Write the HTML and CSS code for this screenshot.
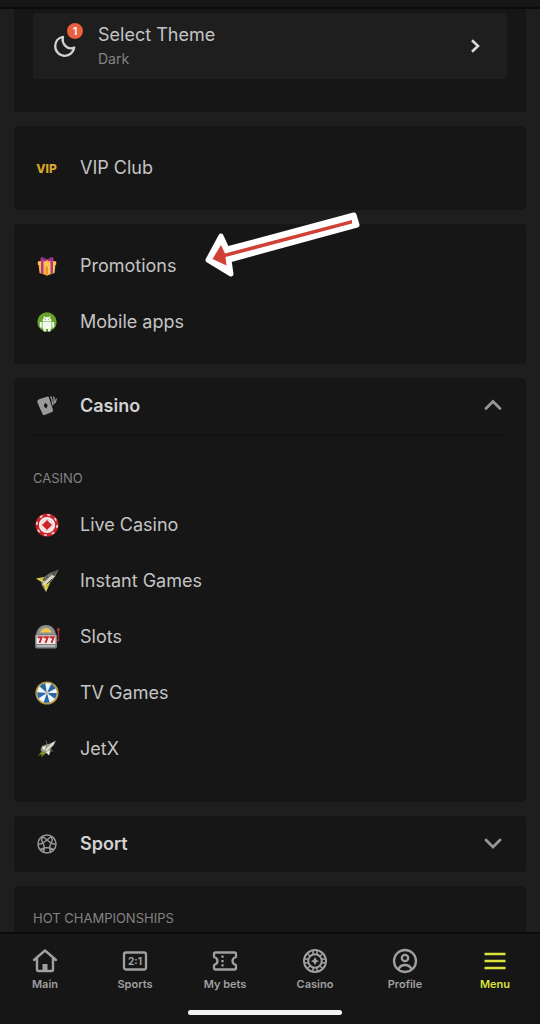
FILE: index.html
```html
<!DOCTYPE html>
<html lang="en">
<head>
<meta charset="utf-8">
<meta name="viewport" content="width=device-width, initial-scale=1">
<title>Menu</title>
<link rel="stylesheet" href="styles.css">
</head>
<body>
<div class="app">
  <header class="topbar"></header>
  <main class="content">
    <section class="card card-theme">
      <button class="theme" type="button">
        <span class="theme-icon">
          <svg width="24" height="24" viewBox="0 0 24 24" fill="none" stroke="#d2d2d2" stroke-width="2.300" stroke-linejoin="round"><path d="M10 2.800C5.300 3.400 2.200 7.300 2.200 12.200a9.600 9.600 0 0 0 9.600 9.600c4.900 0 8.800-3.500 9.400-8.300-2.500 1.300-6 1-8.600-1.400S9.300 5.800 10 2.800z"/></svg>
          <span class="badge">1</span>
        </span>
        <span class="theme-text">
          <span class="theme-title">Select Theme</span>
          <span class="theme-value">Dark</span>
        </span>
        <svg width="12" height="16" viewBox="0 0 12 16" fill="none" stroke="#d8d8d8" stroke-width="2.600"><path d="M2 2.200 8 8l-6 5.800"/></svg>
      </button>
    </section>

    <nav class="card card-links">
      <a class="row" href="#vip"><span class="icon vip">VIP</span>VIP Club</a>
    </nav>

    <nav class="card card-links">
      <a class="row" href="#promotions">
        <span class="icon"><svg width="20" height="20" viewBox="0 0 20 20"><path d="M1.500 8 10 10v9.500L2.500 17z" fill="#f3b63e"/><path d="M18.500 8 10 10v9.500l7.500-2.500z" fill="#f7cf55"/><path d="M.8 5.500 10 3.500l9.200 2v3.200L10 11 .8 8.700z" fill="#f9c750"/><path d="M4 5v12.500l2.500.8V5zM13.500 5v13.300l2.500-.8V5z" fill="#b7338c"/><path d="M9 10.500h2v9H9z" fill="#e7962f"/><path d="M10 5C7 6 3 5.500 3.500 2.500 4.500 0 8.500 1.500 10 5c1.500-3.500 5.500-5 6.500-2.500C17 5.500 13 6 10 5z" fill="#c13a9c"/><path d="M5 3q2-1 3.500 1.200M15 3q-2-1-3.500 1.200" stroke="#611c61" fill="none"/></svg></span>Promotions</a>
      <a class="row" href="#apps">
        <span class="icon"><svg width="20" height="20" viewBox="0 0 20 20"><circle cx="10" cy="10" r="9.700" fill="#67a32b"/><path d="M5.500 9a4.500 4 0 0 1 9 0zM5.500 9.600h9V16q0 1-1 1h-7q-1 0-1-1zM2.800 10h2v5.500h-2zM15.200 10h2v5.500h-2zM6.500 16H9v3.600H6.500zM11 16h2.500v3.600H11z" fill="#f3f8ee"/><path d="m6.800 4 1.200 2M13.200 4 12 6" stroke="#f3f8ee"/><circle cx="8.200" cy="7.300" r=".6" fill="#67a32b"/><circle cx="11.800" cy="7.300" r=".6" fill="#67a32b"/></svg></span>Mobile apps</a>
      <svg class="pointer" width="165" height="75" viewBox="0 0 165 75"><path d="M8 55 21 31 27 44 154 10 157 20 29 55 31 69z" fill="#fff" stroke="#fff" stroke-width="5" stroke-linejoin="round"/><path d="M12.500 54 21 40 25 48.500 152 15V18.500L25.500 52 26.500 60.500z" fill="#cf4035"/></svg>
    </nav>

    <section class="card">
      <button class="head" type="button" aria-expanded="true">
        <span class="icon"><svg width="20" height="20" viewBox="0 0 20 20"><path d="m2 3.300 8-2.600q1.500-.4 2 1l4 12.300q.4 1.500-1 2l-7.500 3q-1.500.5-2-1L.3 6.300q-.3-2 1.700-3z" fill="#9a9a9a"/><path d="m8 6.700 2.700 2.300-1.200 3.500-2.800-2.300z" fill="#161616"/><path d="M13 .8q1.300.1 1.500 1L16 9.500M16 .8q1.200.5 1.100 1.500L17 8M19.500 2.500 18 7" fill="none" stroke="#9a9a9a" stroke-width="1.300"/></svg></span>
        <span class="head-text">Casino</span>
        <svg width="20" height="12" viewBox="0 0 20 12" fill="none" stroke="#969696" stroke-width="2.800" stroke-linecap="round"><path d="m3 9.500 7-7 7 7"/></svg>
      </button>
      <div class="group">
        <h2 class="label">Casino</h2>
        <a class="row" href="#live"><span class="icon"><svg width="24" height="24" viewBox="0 0 24 24"><circle cx="12" cy="12" r="11.500" fill="#ca242b"/><circle cx="12" cy="12" r="10.200" fill="none" stroke="#e8c8c8" stroke-width="1.800" stroke-dasharray="3 5.010"/><circle cx="12" cy="12" r="6.800" fill="#cc2328" stroke="#f5eeee" stroke-width="2.600"/><circle cx="12" cy="12" r="5.600" fill="#f5eeee"/><path d="m12 7 5 5-5 5-5-5z" fill="#cc2328"/></svg></span>Live Casino</a>
        <a class="row" href="#instant"><span class="icon"><svg width="24" height="24" viewBox="0 0 24 24"><path d="M23.500.7 15 4 9 8 .8 9.500 6 13l1 4 4 6.300L15 14l5-6z" fill="#747469"/><path d="M1 9.500 9.500 8 7 12zM11 23l-1-7 3.500-3L15 14z" fill="#d2bb37"/><path d="m7 15 10-9 3 1-7 7-4 3z" fill="#d6d4c4"/><path d="m16 4 7-3-4 6z" fill="#55554f"/><path d="m3 10 6 3 2 8" fill="none" stroke="#eadb62" stroke-width="1.300"/><path d="m8 11 5-4M12 15l5-5" stroke="#4a4a40"/></svg></span>Instant Games</a>
        <a class="row" href="#slots"><span class="icon"><svg width="26" height="26" viewBox="0 0 26 26"><path d="M2 12C2.500 5 6 1 12 1s9.500 4 10 11z" fill="#8b8f90"/><path d="M6 8.500Q8 4 12 4t6 4.500z" fill="#edc551"/><rect x="1" y="10" width="22" height="14.500" rx="2" fill="#7c8182"/><rect x="2.500" y="11.500" width="19" height="8.500" fill="#f2ebe8"/><path d="M3.500 13.200h4.200L5.500 19M9.500 13.200h4.200L11.500 19M15.500 13.200h4.200L17.500 19" fill="none" stroke="#c8262c" stroke-width="1.900"/><path d="M3 22h18" stroke="#b3b6b6" stroke-width="2"/><path d="M23 16.500h1.500V6" fill="none" stroke="#a72c2c" stroke-width="1.400"/><circle cx="24.300" cy="5.500" r="1.500" fill="#b83231"/></svg></span>Slots</a>
        <a class="row" href="#tv"><span class="icon"><svg width="24" height="24" viewBox="0 0 24 24"><circle cx="12" cy="12" r="10.800" fill="#f0f5f8" stroke="#b89a3e" stroke-width="1.600"/><circle cx="12" cy="12" r="4.900" fill="none" stroke="#2867ac" stroke-width="9.800" stroke-dasharray="3.079 3.079"/><circle cx="12" cy="12" r="2" fill="#b9bcb0"/></svg></span>TV Games</a>
        <a class="row" href="#jetx"><span class="icon"><svg width="20" height="20" viewBox="0 0 20 20"><path d="M19 1.500 13 4.500 9 5.500 5 7 3.500 11 6 14l4 .5 2 2 1.500-4L14 9l3-3z" fill="#999a87"/><path d="m8 11 7-7 3-1.500L16 6l-6 6z" fill="#dfdfd2"/><path d="m5 8 4-.5-2 4zM9 13l4-2-1 5z" fill="#eeeee8"/><path d="m5 12-4 5 4-2-1 3.500L9 14" fill="#86882e"/><path d="M10 5 9 1.500M14 10l1.500 3" stroke="#686a58"/></svg></span>JetX</a>
      </div>
    </section>

    <section class="card">
      <button class="head" type="button" aria-expanded="false">
        <span class="icon"><svg width="20" height="20" viewBox="0 0 20 20" fill="none" stroke="#969696" stroke-width="1.500" stroke-linejoin="round"><circle cx="10" cy="10" r="9"/><path d="m10 6 4 3-1.500 4.800h-5L6 9zM10 6 6 2.500M10 6l4-3.500M14 9l4.500 1.500M6 9l-4.500 1.500M12.500 13.800l1 4.200M7.500 13.800 6.500 18M14 2.500l1.500 3.500L14 9M6 2.500 4.500 6 6 9M7.500 13.800 3.500 15.500M12.500 13.800l4 1.700"/></svg></span>
        <span class="head-text">Sport</span>
        <svg width="20" height="12" viewBox="0 0 20 12" fill="none" stroke="#969696" stroke-width="2.800" stroke-linecap="round"><path d="m3 3 7 7 7-7"/></svg>
      </button>
    </section>

    <section class="card card-hot"><h2 class="label">Hot championships</h2></section>
  </main>

  <footer class="bottom">
    <nav class="tabs">
      <a class="tab" href="#main"><svg width="28" height="28" viewBox="0 0 28 28" fill="none" stroke="#a0a0a0" stroke-width="2.400" stroke-linejoin="round" stroke-linecap="round"><path d="M3 13 14 3.500 25 13M6 11.500v11q0 1.500 1.500 1.500h13q1.500 0 1.500-1.500v-11"/><path d="M11.500 24v-7h5v7z" fill="#a0a0a0" stroke="none"/></svg>Main</a>
      <a class="tab" href="#sports"><svg width="28" height="28" viewBox="0 0 28 28"><rect x="3" y="5.500" width="22" height="17" rx="2" fill="none" stroke="#a0a0a0" stroke-width="2.300"/><text class="score" x="14" y="18" text-anchor="middle">2:1</text></svg>Sports</a>
      <a class="tab" href="#bets"><svg width="28" height="28" viewBox="0 0 28 28" fill="none" stroke="#a0a0a0" stroke-width="2.300" stroke-linejoin="round"><path d="M4.500 5.500h19q1.500 0 1.500 1.500v3q-3.500 1-3.500 4t3.500 4v3q0 1.500-1.500 1.500h-19Q3 22.500 3 21v-3q3.500-1 3.500-4T3 10V7q0-1.500 1.500-1.500z"/><path d="M11.500 8.500v2.300M11.500 12.900v2.300M11.500 17.300v2.300"/></svg>My bets</a>
      <a class="tab" href="#casino"><svg width="28" height="28" viewBox="0 0 28 28" fill="none" stroke="#a0a0a0" stroke-width="2"><circle cx="14" cy="14" r="11"/><circle cx="14" cy="14" r="6.800"/><path d="M12 3v4.500M16 3v4.500M12 20.500V25M16 20.500V25M3.500 12l4 .3M3.500 16l4-.3M24.500 12l-4 .3M24.500 16l-4-.3M6 6.200l3 2.800M22 6.200 19 9M6 21.800 9 19M22 21.800 19 19" stroke-width="1.500"/><path d="M14 10q.8 3.200 4 4-3.200.8-4 4-.8-3.200-4-4 3.200-.8 4-4z" fill="#a0a0a0" stroke="none"/></svg>Casino</a>
      <a class="tab" href="#profile"><svg width="28" height="28" viewBox="0 0 28 28" fill="none" stroke="#a0a0a0" stroke-width="2.300"><circle cx="14" cy="14" r="11"/><circle cx="14" cy="11" r="3.200"/><path d="M7.500 22.500q1.500-4.500 6.500-4.500t6.500 4.500"/></svg>Profile</a>
      <a class="tab tab-active" href="#menu" aria-current="page"><svg width="28" height="28" viewBox="0 0 28 28" stroke="#dbe33c" stroke-width="2.400"><path d="M3.500 7h21M3.500 14h21M3.500 21h21"/></svg>Menu</a>
    </nav>
    <div class="home-bar"></div>
  </footer>
</div>
</body>
</html>
```
FILE: styles.css
```css
* { box-sizing: border-box; }

body {
  margin: 0;
  background: #1e1e1e;
  color: #c4c4c4;
  font-family: Inter, "Liberation Sans", sans-serif;
  font-size: 18px;
}

button {
  border: 0;
  background: none;
  color: inherit;
  font: inherit;
  text-align: left;
}

a { color: inherit; text-decoration: none; }
svg { display: block; flex: none; }

.app {
  display: flex;
  flex-direction: column;
  height: 100vh;
}

.topbar {
  flex: none;
  height: 9px;
  background: #161616;
  border-bottom: 2px solid #0b0b0b;
}

.content {
  flex: 1;
  min-height: 0;
  overflow: hidden;
  display: flex;
  flex-direction: column;
  gap: 14px;
  padding: 0 14px;
}

.card {
  position: relative;
  flex: none;
  background: #161616;
  border-radius: 4px;
}

.card-theme { padding: 4px 19px 33px; border-radius: 0; }
.card-links { padding: 14px 0; }
.card-hot { padding-bottom: 80px; }
.card-hot .label { padding-top: 23px; }

.theme {
  display: flex;
  align-items: center;
  width: 100%;
  height: 66px;
  padding: 0 25px 0 20px;
  background: #1e1e1e;
  border-radius: 4px;
}

.theme-icon { position: relative; width: 45px; }

.badge {
  position: absolute;
  top: -12px;
  left: 13px;
  width: 18px;
  height: 18px;
  border: 1px solid #161616;
  border-radius: 50%;
  background: #ec6040;
  color: #fff;
  font-size: 11px;
  font-weight: 600;
  line-height: 16px;
  text-align: center;
}

.theme-text {
  flex: 1;
  display: flex;
  flex-direction: column;
  gap: 4px;
  padding-bottom: 2px;
}

.theme-title { line-height: 24px; }
.theme-value { color: #838383; font-size: 14px; line-height: 16px; }

.row, .head {
  display: flex;
  align-items: center;
  gap: 20px;
  height: 56px;
  padding: 0 19px 2px;
}

.head { width: 100%; padding-right: 23px; }
.head-text { flex: 1; font-weight: 600; color: #d2d2d2; }

.icon {
  display: flex;
  justify-content: center;
  flex: none;
  width: 27px;
  padding-top: 2px;
}

.vip { color: #d9a927; font-size: 12px; font-weight: 800; }

.group {
  margin: 0 19px;
  padding-bottom: 25px;
  border-top: 2px solid #121212;
}

.group .row, .group .label { padding-left: 0; }

.label {
  margin: 0;
  padding: 33px 19px 10px;
  color: #838383;
  font-size: 13px;
  font-weight: 400;
  line-height: 18px;
  text-transform: uppercase;
}

.pointer {
  position: absolute;
  top: -19px;
  left: 186px;
}

.bottom {
  flex: none;
  padding: 13px 0 9px;
  background: #161616;
  border-top: 2px solid #0b0b0b;
}

.tabs { display: flex; }

.tab {
  flex: 1;
  display: flex;
  flex-direction: column;
  align-items: center;
  gap: 1px;
  color: #a0a0a0;
  font-size: 11px;
  font-weight: 600;
  line-height: 16px;
}

.tab-active { color: #dbe33c; }
.score { fill: #a0a0a0; font-size: 10px; font-weight: 700; }

.home-bar {
  width: 154px;
  height: 5px;
  margin: 18px 0 0 calc(50% - 82px);
  border-radius: 3px;
  background: #f4f4f4;
}
```
